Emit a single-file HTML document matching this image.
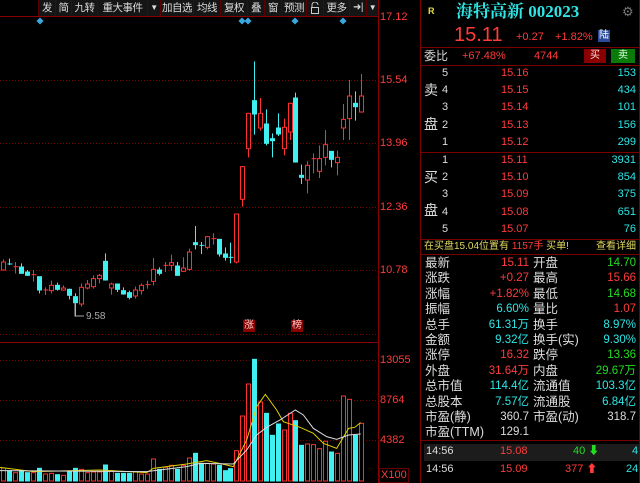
<!DOCTYPE html>
<html><head><meta charset="utf-8"><style>
*{margin:0;padding:0;box-sizing:border-box}
body{width:640px;height:483px;background:#000;overflow:hidden;position:relative;font-family:"Liberation Sans","Noto Sans CJK SC",sans-serif;font-size:12px;color:#ccc}
.a{position:absolute;white-space:nowrap;line-height:1}
.r{color:#ff3b3b}.c{color:#2ee6e6}.g{color:#22dd22}.w{color:#ddd}.y{color:#e8e040}
.tb{position:absolute;top:0;height:16px;background:#151515;border-left:1px solid #5a0000;color:#ddd;font-size:10.5px;line-height:16px;text-align:center;white-space:nowrap;overflow:hidden;letter-spacing:-0.5px}
.rt{text-align:right}
</style></head><body>
<svg id="s" width="420" height="483" style="position:absolute;left:0;top:0"></svg>
<div class="tb" style="left:38px;width:17px">发</div>
<div class="tb" style="left:55px;width:16px">简</div>
<div class="tb" style="left:71px;width:26px">九转</div>
<div class="tb" style="left:97px;width:50px">重大事件</div>
<div class="tb" style="left:147px;width:13px;font-size:8px">▼</div>
<div class="tb" style="left:160px;width:33px">加自选</div>
<div class="tb" style="left:193px;width:27px">均线</div>
<div class="tb" style="left:220px;width:27px">复权</div>
<div class="tb" style="left:247px;width:17px">叠</div>
<div class="tb" style="left:264px;width:17px">窗</div>
<div class="tb" style="left:281px;width:25px">预测</div>
<div class="tb" style="left:306px;width:17px"><svg width="10" height="12" style="margin-top:2px"><path d="M2 5V3a3 3 0 0 1 6 0" fill="none" stroke="#ccc"/><rect x="1.5" y="5.5" width="7" height="6" fill="none" stroke="#ccc"/></svg></div>
<div class="tb" style="left:323px;width:26px">更多</div>
<div class="tb" style="left:349px;width:17px;font-size:10px">➜|</div>
<div class="tb" style="left:366px;width:12px;font-size:8px">▼</div>
<div class="a r" style="left:380px;top:12px;font-size:11px">17.12</div>
<div class="a r" style="left:380px;top:75px;font-size:11px">15.54</div>
<div class="a r" style="left:380px;top:138px;font-size:11px">13.96</div>
<div class="a r" style="left:380px;top:202px;font-size:11px">12.36</div>
<div class="a r" style="left:380px;top:265px;font-size:11px">10.78</div>
<div class="a r" style="left:380px;top:355px;font-size:11px">13055</div>
<div class="a r" style="left:380px;top:395px;font-size:11px">8764</div>
<div class="a r" style="left:380px;top:435px;font-size:11px">4382</div>
<div class="a r" style="left:379px;top:468px;font-size:11px;border:1px solid #600;padding:1px">X100</div>
<div class="a" style="left:86px;top:312px;font-size:10px;color:#aaa">9.58</div>
<div class="a" style="left:243px;top:320px;font-size:10px;background:#800;color:#fcc;padding:1px">涨</div>
<div class="a" style="left:291px;top:320px;font-size:10px;background:#800;color:#fcc;padding:1px">榜</div>

<div class="a y" style="left:428px;top:7px;font-size:9px;font-weight:bold">R</div>
<div class="a c" style="left:456px;top:3px;font-size:17px;font-weight:bold;font-family:'Liberation Serif','Noto Serif CJK SC',serif">海特高新 002023</div>
<div class="a" style="left:622px;top:5px;font-size:13px;color:#777">⚙</div>
<div class="a r" style="left:454px;top:25px;font-size:20px">15.11</div>
<div class="a r" style="left:516px;top:32px;font-size:11px">+0.27</div>
<div class="a r" style="left:555px;top:32px;font-size:11px">+1.82%</div>
<div class="a" style="left:598px;top:30px;font-size:10px;background:#2a4a9a;color:#fff;padding:1px">陆</div>
<div class="a w" style="left:424px;top:50px;font-size:12px">委比</div>
<div class="a r" style="left:462px;top:51px;font-size:11px">+67.48%</div>
<div class="a r" style="left:534px;top:51px;font-size:11px">4744</div>
<div class="a" style="left:584px;top:49px;width:22px;height:14px;background:#8a0000;color:#fdd;font-size:10px;text-align:center;line-height:14px">买</div>
<div class="a" style="left:611px;top:49px;width:24px;height:14px;background:#0a7a0a;color:#dfd;font-size:10px;text-align:center;line-height:14px">卖</div>
<div id="ob"></div>
<div class="a" style="left:424px;top:242px;font-size:10px;color:#e0d860">在买盘15.04位置有 <span class="r">1157手</span> 买单!</div>
<div class="a" style="left:596px;top:242px;font-size:10px;color:#e0d860">查看详细</div>
<div id="st"></div>
<div class="a" style="left:424px;top:444px;width:216px;height:17px;background:#1c1c1c"></div>
<div class="a w" style="left:426px;top:446px;font-size:11px">14:56</div>
<div class="a r" style="left:500px;top:446px;font-size:11px">15.08</div>
<div class="a g" style="left:573px;top:446px;font-size:11px">40 <b>⬇</b></div>
<div class="a c" style="left:632px;top:446px;font-size:11px">4</div>
<div class="a w" style="left:426px;top:464px;font-size:11px">14:56</div>
<div class="a r" style="left:500px;top:464px;font-size:11px">15.09</div>
<div class="a r" style="left:565px;top:464px;font-size:11px">377 ⬆</div>
<div class="a c" style="left:626px;top:464px;font-size:11px">24</div>
<svg width="220" height="483" style="position:absolute;left:420px;top:0">
<g stroke="#7a0000" stroke-width="1" fill="none">
<line x1="0.5" y1="0" x2="0.5" y2="483"/><line x1="219.5" y1="0" x2="219.5" y2="483"/>
<line x1="0" y1="47.5" x2="220" y2="47.5"/><line x1="0" y1="65.5" x2="220" y2="65.5"/>
<line x1="0" y1="152.5" x2="220" y2="152.5"/><line x1="0" y1="239.5" x2="220" y2="239.5"/>
<line x1="0" y1="254.5" x2="220" y2="254.5"/><line x1="0" y1="440.5" x2="220" y2="440.5"/>
</g></svg>
<script>
var S=document.getElementById('s'),h='';
function L(x1,y1,x2,y2,c,d){h+='<line x1="'+x1+'" y1="'+y1+'" x2="'+x2+'" y2="'+y2+'" stroke="'+c+'" stroke-width="1"'+(d?' stroke-dasharray="1,2"':'')+'/>';}
L(0,16.5,378,16.5,'#8a0000');L(378.5,0,378.5,483,'#8a0000');L(0,342.5,378,342.5,'#8a0000');
[80.5,143.5,207.5,270.5,334.5].forEach(function(y){L(0,y,378,y,'#7a0000',1)});
[360.5,400.5,440.5].forEach(function(y){L(0,y,378,y,'#7a0000',1)});
[40,242,248,295,343].forEach(function(x){h+='<rect x="'+(x-2.5)+'" y="18.5" width="5" height="5" fill="#3aa8e0" transform="rotate(45 '+x+' 21)"/>'});
var C=[[10,636,660,628,662,1],[28,642,645,626,645,0],[46,650,651,636,670,1],[64,651,670,640,670,0],[82,666,676,660,678,0],[100,674,675,660,695,1],[118,680,720,680,730,0],[136,720,721,712,735,1],[154,706,722,692,730,1],[172,706,718,698,722,0],[190,714,720,706,722,1],[208,718,736,716,748,0],[226,740,758,730,800,0],[244,712,762,700,770,1],[262,702,714,690,718,1],[280,686,710,676,716,1],[298,676,686,672,700,1],[316,634,690,610,692,0],[334,702,714,698,734,1],[352,702,718,702,726,0],[370,722,732,712,734,0],[388,728,742,722,748,0],[406,720,738,710,746,1],[424,706,722,700,734,1],[442,704,705,692,716,1],[460,658,694,624,706,1],[478,660,670,652,676,0],[496,646,647,636,666,1],[514,638,646,614,662,1],[532,648,676,636,678,0],[550,654,664,622,666,1],[568,606,658,596,662,1],[586,578,584,528,598,0],[604,586,590,576,612,0],[622,560,592,558,598,1],[640,566,567,550,584,1],[658,568,612,568,620,0],[676,612,622,592,632,0],[690,622,623,578,640,0],[708,492,636,492,640,1],[726,350,448,348,470,1],[744,190,296,190,322,1],[762,152,192,34,254,0],[780,190,234,144,242,1],[798,222,280,178,286,0],[816,266,272,250,322,0],[834,234,252,190,258,0],[852,232,296,206,316,1],[870,160,246,158,270,1],[886,144,336,128,338,0],[904,376,382,344,402,0],[922,346,390,334,430,1],[940,326,327,310,370,1],[958,326,364,286,384,1],[976,284,322,240,346,1],[994,304,328,304,352,0],[1012,322,338,302,376,1],[1030,208,234,162,270,1],[1046,138,206,90,270,1],[1064,160,170,124,212,0],[1082,138,186,72,188,1]];
var V=[384,392,398,392,398,398,385,402,400,404,406,396,385,388,398,396,396,375,392,400,400,400,396,402,402,357,388,382,376,388,376,354,340,370,370,372,376,392,386,332,228,132,58,186,220,286,252,270,220,242,316,312,314,326,304,336,340,168,178,286,250];
C.forEach(function(c,i){var x=Math.round(c[0]/3)+0.5,col=c[5]?'#ff3030':'#40f0f0';
var t=50+c[1]/3,b=50+c[2]/3,wt=50+c[3]/3,wb=50+c[4]/3;
L(x,wt,x,wb,col);
if(b-t<1.5){L(x-2,t,x+3,t,col)}else{h+='<rect x="'+(x-2)+'" y="'+t+'" width="4" height="'+(b-t)+'" fill="'+(c[5]?'#000':col)+'" stroke="'+col+'" stroke-width="1"/>';}
var vt=340+V[i]/3;h+='<rect x="'+(x-2)+'" y="'+vt+'" width="4" height="'+(481-vt)+'" fill="'+(c[5]?'#000':col)+'" stroke="'+col+'" stroke-width="1"/>';});
function P(a,col){var s='';for(var i=0;i<a.length;i+=2)s+=(a[i]/3)+','+(340+a[i+1]/3)+' ';h+='<polyline points="'+s+'" fill="none" stroke="'+col+'" stroke-width="1"/>';}
P([0,382,100,395,300,390,440,398,460,385,560,372,620,362,680,375,700,380,740,300,770,200,796,163,830,210,850,245,900,262,940,280,970,310,1010,325,1046,265,1064,262,1082,248],'#e0d000');
P([0,392,440,395,560,380,600,370,700,372,740,330,770,285,800,262,840,240,886,210,910,225,940,265,980,290,1010,298,1046,285,1082,282],'#dddddd');
h+='<polyline points="75,303 75,316 84,316" fill="none" stroke="#aaa"/>';
S.innerHTML=h;
var o='',sp=[['5','15.16','153'],['4','15.15','434'],['3','15.14','101'],['2','15.13','156'],['1','15.12','299']],bp=[['1','15.11','3931'],['2','15.10','854'],['3','15.09','375'],['4','15.08','651'],['5','15.07','76']];
function ob(a,y0){a.forEach(function(r,i){var y=y0+i*17.2;o+='<div class="a w" style="left:442px;top:'+y+'px;font-size:11px">'+r[0]+'</div><div class="a r" style="left:501px;top:'+y+'px;font-size:11px">'+r[1]+'</div><div class="a c rt" style="right:4px;top:'+y+'px;font-size:11px">'+r[2]+'</div>'});}
ob(sp,68);ob(bp,155);
o+='<div class="a w" style="left:424px;top:83px;font-size:14px">卖</div><div class="a w" style="left:424px;top:117px;font-size:14px">盘</div><div class="a w" style="left:424px;top:170px;font-size:14px">买</div><div class="a w" style="left:424px;top:203px;font-size:14px">盘</div>';
document.getElementById('ob').innerHTML=o;
var st=[['最新','15.11','r','开盘','14.70','g'],['涨跌','+0.27','r','最高','15.66','r'],['涨幅','+1.82%','r','最低','14.68','g'],['振幅','6.60%','c','量比','1.07','r'],['总手','61.31万','c','换手','8.97%','c'],['金额','9.32亿','c','换手(实)','9.30%','c'],['涨停','16.32','r','跌停','13.36','g'],['外盘','31.64万','r','内盘','29.67万','g'],['总市值','114.4亿','c','流通值','103.3亿','c'],['总股本','7.57亿','c','流通股','6.84亿','c'],['市盈(静)','360.7','w','市盈(动)','318.7','w'],['市盈(TTM)','129.1','w','','','w']];
var q='';st.forEach(function(r,i){var y=257+i*15.4;q+='<div class="a w" style="left:425px;top:'+y+'px;font-size:12.5px">'+r[0]+'</div><div class="a rt '+r[2]+'" style="right:111px;top:'+(y+1)+'px;font-size:11.5px">'+r[1]+'</div><div class="a w" style="left:533px;top:'+y+'px;font-size:12.5px">'+r[3]+'</div><div class="a rt '+r[5]+'" style="right:4px;top:'+(y+1)+'px;font-size:11.5px">'+r[4]+'</div>'});
document.getElementById('st').innerHTML=q;
</script>
</body></html>
